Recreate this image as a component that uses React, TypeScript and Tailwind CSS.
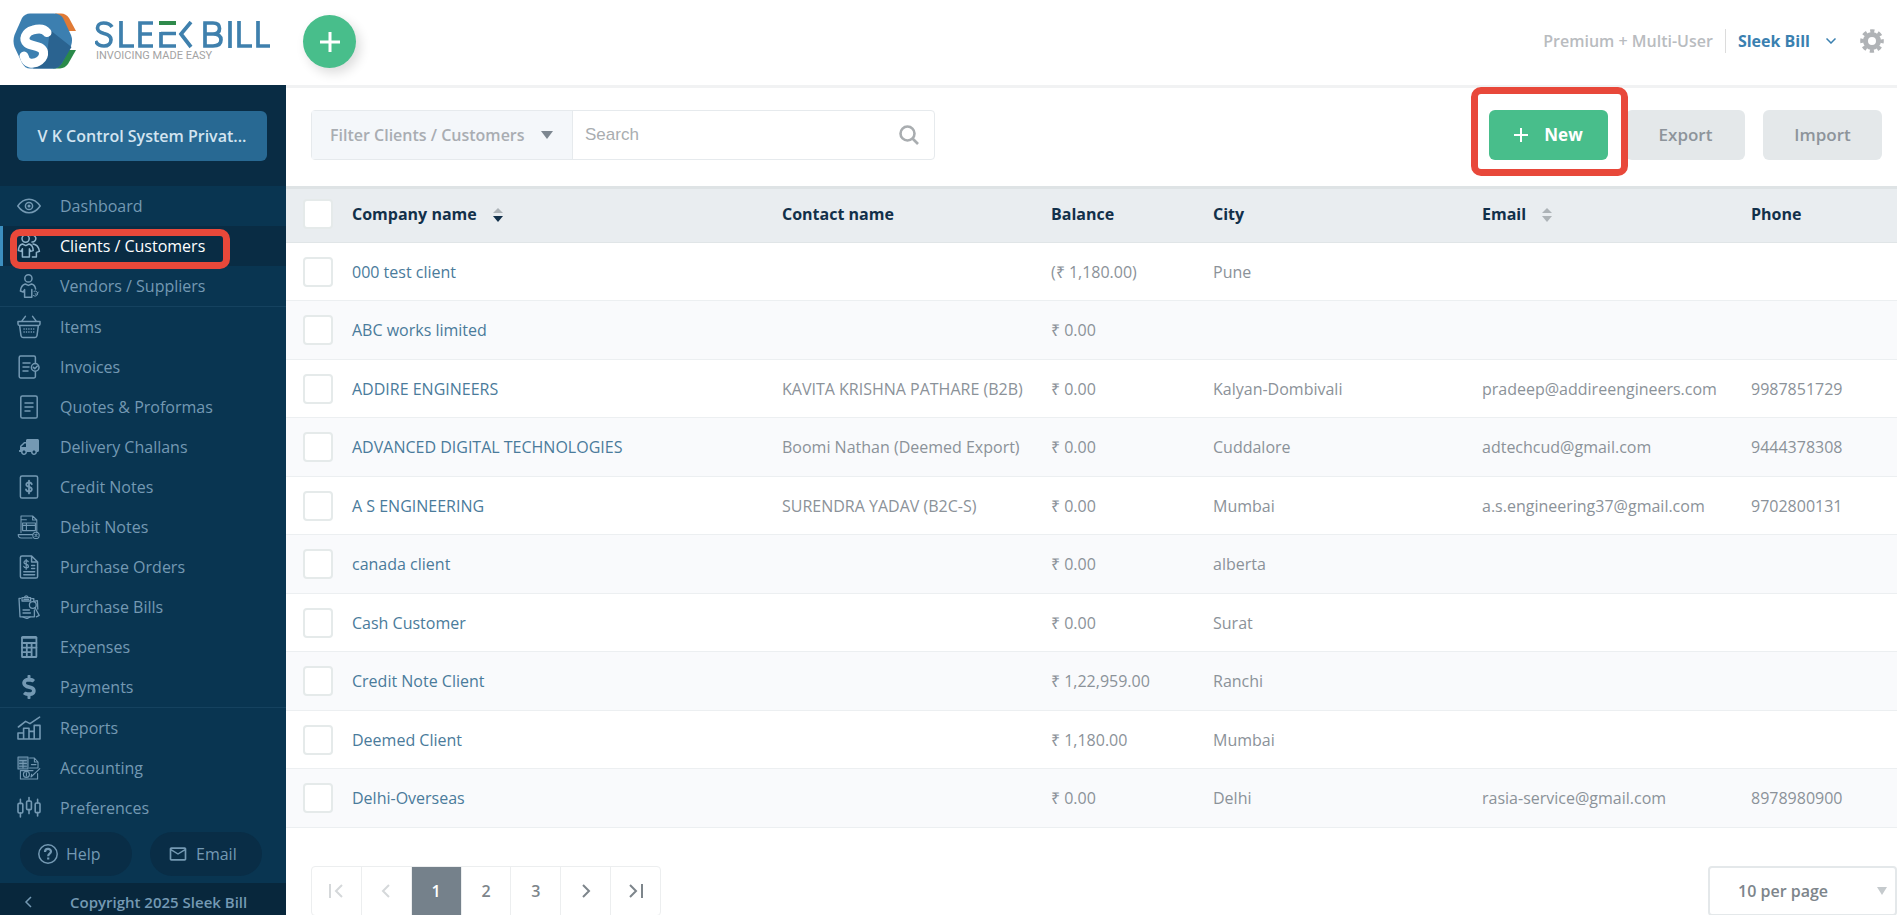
import type { ReactNode } from 'react';
import { FaDollarSign, FaTruck } from 'react-icons/fa';
import { MdOutlineEmail } from 'react-icons/md';

type Client = {
  name: string;
  contact?: string;
  balance: string;
  city?: string;
  email?: string;
  phone?: string;
};

const CLIENTS: Client[] = [
  { name: '000 test client', balance: '(₹ 1,180.00)', city: 'Pune' },
  { name: 'ABC works limited', balance: '₹ 0.00' },
  {
    name: 'ADDIRE ENGINEERS',
    contact: 'KAVITA KRISHNA PATHARE (B2B)',
    balance: '₹ 0.00',
    city: 'Kalyan-Dombivali',
    email: 'pradeep@addireengineers.com',
    phone: '9987851729',
  },
  {
    name: 'ADVANCED DIGITAL TECHNOLOGIES',
    contact: 'Boomi Nathan (Deemed Export)',
    balance: '₹ 0.00',
    city: 'Cuddalore',
    email: 'adtechcud@gmail.com',
    phone: '9444378308',
  },
  {
    name: 'A S ENGINEERING',
    contact: 'SURENDRA YADAV (B2C-S)',
    balance: '₹ 0.00',
    city: 'Mumbai',
    email: 'a.s.engineering37@gmail.com',
    phone: '9702800131',
  },
  { name: 'canada client', balance: '₹ 0.00', city: 'alberta' },
  { name: 'Cash Customer', balance: '₹ 0.00', city: 'Surat' },
  { name: 'Credit Note Client', balance: '₹ 1,22,959.00', city: 'Ranchi' },
  { name: 'Deemed Client', balance: '₹ 1,180.00', city: 'Mumbai' },
  { name: 'Delhi-Overseas', balance: '₹ 0.00', city: 'Delhi', email: 'rasia-service@gmail.com', phone: '8978980900' },
];

function Icon({ children, width = 1.5 }: { children: ReactNode; width?: number }) {
  return (
    <svg
      viewBox="0 0 24 24"
      className="size-6"
      fill="none"
      stroke="currentColor"
      strokeWidth={width}
      strokeLinecap="round"
      strokeLinejoin="round"
      aria-hidden="true"
    >
      {children}
    </svg>
  );
}

const EyeIcon = () => (
  <Icon>
    <path d="M0.8 12 C4 7.4 7.8 5.2 12 5.2 S20 7.4 23.2 12 C20 16.6 16.2 18.8 12 18.8 S4 16.6 0.8 12 Z" />
    <circle cx="12" cy="12" r="3.6" />
    <circle cx="12" cy="12" r="0.8" />
  </Icon>
);

const ClientsIcon = () => (
  <Icon>
    <circle cx="8.6" cy="4.6" r="3.6" />
    <path d="M13.4 1.4 a3.6 3.6 0 1 1 1.6 6.7" />
    <path d="M5.4 10 C3 10.6 1.6 13 1.4 16.6 L4.2 17.4 L5.4 14.8 V23 H12.4 V14.8 L13.6 17.4 L16.2 16.6 C16 13 14.6 10.6 12 10 L8.8 11.6 Z" />
    <path d="M16 10 c3.6 0.4 5.8 3 6.4 7.4 l-3 1 V23 h-4" />
  </Icon>
);

const VendorIcon = () => (
  <Icon>
    <circle cx="11.4" cy="4.4" r="3.6" />
    <path d="M18.6 15 C18.2 12.4 16.4 10.4 14.6 10 L11.4 11.4 L8.2 10 C5.6 10.8 3.8 13.4 3.4 17 L6.2 18 L7.6 15.6 V23.2 H14.8 V15.6" />
    <path d="M16.4 21.6 a2.6 2.6 0 1 0 0.6 -4.4 M18 19.6 l1.2 1 l2.2 -2.6" strokeWidth="1" />
  </Icon>
);

const BasketIcon = () => (
  <Icon>
    <path d="M1 6.6 H23 V9 Q23 10.4 21.6 10.4 H2.4 Q1 10.4 1 9 Z M2.6 10.4 L4 20.6 Q4.3 22.4 6 22.4 H18 Q19.7 22.4 20 20.6 L21.4 10.4 M4.6 6.4 L8.4 1.4 M19.4 6.4 L15.6 1.4" />
    <path d="M7 14 H17.6 M7 17 H17.6" strokeDasharray="0.2 2.2" />
  </Icon>
);

const InvoiceIcon = () => (
  <Icon>
    <path d="M18.4 8.4 V2.4 Q18.4 1 17 1 H3.6 Q2.2 1 2.2 2.4 V21.6 Q2.2 23 3.6 23 H17 Q18.4 23 18.4 21.6 V16.4" />
    <path d="M6 8 H13 M6 12 H12 M6 16 H11" />
    <circle cx="18.2" cy="12.4" r="3.8" />
    <path d="M16.4 12.4 l1.4 1.4 l2.6 -2.8" />
  </Icon>
);

const QuoteIcon = () => (
  <Icon>
    <rect x="3.8" y="0.9" width="16.4" height="22.2" rx="1.6" />
    <path d="M8 8 H16 M8 12 H16 M8 16 H13" />
  </Icon>
);

const CreditIcon = () => (
  <Icon>
    <rect x="3.4" y="0.9" width="17.2" height="22.2" rx="1.6" />
    <path
      d="M14.8 9.2 C14.2 7.8 12.8 7.4 11.8 7.5 C10.2 7.6 9.2 8.4 9.3 9.8 C9.4 12.6 14.8 11.2 14.8 14.2 C14.8 15.6 13.4 16.4 12 16.4 C10.6 16.4 9.4 15.8 9 14.4 M12 5.6 V18.4"
      strokeWidth="1.8"
    />
  </Icon>
);

const DebitIcon = () => (
  <Icon width={1.1}>
    <path d="M4 17.6 V1 H15.6 L19.8 5 V18 M15.6 1 V5 H19.8 M4.4 4.8 H9.4" />
    <path d="M5.6 8 H18.4 V15.6 H5.6 Z M5.6 10.4 H18.4 M9.4 8 V15.6" />
    <path d="M15.6 19.6 H1.2 Q1.2 23 4.4 23 H15" />
    <circle cx="19" cy="20.4" r="3.2" />
    <path d="M18 19.4 l2 2 M20 19.4 l-2 2" />
  </Icon>
);

const PurchaseOrderIcon = () => (
  <Icon>
    <path d="M14.6 1 H5 Q3.4 1 3.4 2.6 V21.4 Q3.4 23 5 23 H19 Q20.6 23 20.6 21.4 V7 Z M14.6 1 V7 H20.6" />
    <path d="M11.2 6.6 C10.6 5.4 7 5.2 7 7.4 C7 9.6 11.4 8.8 11.4 11.2 C11.4 13.4 7.4 13.2 6.8 11.4 M9.2 4.4 V14.2" strokeWidth="1.3" />
    <path d="M14.6 10.6 H17.6 M14.6 13.6 H17.6 M6.8 16.8 H17.6 M6.8 19.8 H17.6" />
  </Icon>
);

const PurchaseBillIcon = () => (
  <Icon width={1.3}>
    <path d="M3.4 3.4 H2 L3 21.8 H17.4 V15 M14.6 3.6 H16.8 V6" />
    <path d="M5 2.6 H13.6 V6 H5 Z M7.2 2.6 Q9.2 -0.8 11.4 2.6 M7 4.4 h4.6" />
    <circle cx="15.8" cy="10" r="3.4" />
    <path d="M18 12.8 L22.2 20.4 L19.4 21.8 M17 6.4 L20.4 5.6 L20.8 14 M6 15 H12.4 M6 18 H13.4 M6 22 L10 23.6 L13 22" />
  </Icon>
);

const CalculatorIcon = () => (
  <Icon width={1.8}>
    <rect x="5" y="2" width="14.4" height="20" rx="0.6" />
    <path d="M5 8 H19.4 M5 12.6 H19.4 M5 17.2 H14.6 M9.8 8 V22 M14.6 8 V22" />
    <path d="M5 2.8 H19.4" />
  </Icon>
);

const ReportsIcon = () => (
  <Icon width={1.6}>
    <path d="M1 23 V17 H6.6 V23 Z M6.6 23 V12.2 H12 V23 M12 23 V15.4 H17.2 V23 M17.2 23 V9.4 H23 V23 Z M1 23 H23" />
    <path d="M1.4 11 L8.6 5.4 L13 7.600 L22.6 1.2" />
  </Icon>
);

const AccountingIcon = () => (
  <Icon width={1.1}>
    <path d="M1 1 H11 V13 H1 Z" fill="currentColor" fillOpacity="0.35" />
    <path d="M2.6 4.6 H9.4 M2.6 7.4 H9.4 M2.6 10.2 H9.4 M6 4.6 V12" />
    <path d="M12.6 2 H17.4 L21 6 V12 H12.6 M17.4 2 V6 H21 M14.4 8.6 H19" />
    <path d="M3.4 14.6 V23 H20.6 V17.6 M3.4 14.6 H16" />
    <circle cx="9.4" cy="18.4" r="3" />
    <path d="M9.4 16.8 V20 M14 21 L22.8 12.6 M14 21 l0.6 -2.6" />
  </Icon>
);

const PreferencesIcon = () => (
  <Icon width={1.6}>
    <path d="M3.4 3.4 V7.4 M3.4 17 V21 M12 1.6 V5 M12 13.6 V17.6 M20.6 3.4 V7 M20.6 16.6 V20" />
    <rect x="1" y="7.4" width="4.8" height="9.6" rx="1.2" />
    <rect x="9.6" y="5" width="4.8" height="8.6" rx="1.2" />
    <rect x="18.2" y="7" width="4.8" height="9.6" rx="1.2" />
  </Icon>
);

type NavItem = { label: string; icon: ReactNode; active?: boolean };

const NAV_GROUPS: NavItem[][] = [
  [
    { label: 'Dashboard', icon: <EyeIcon /> },
    { label: 'Clients / Customers', icon: <ClientsIcon />, active: true },
    { label: 'Vendors / Suppliers', icon: <VendorIcon /> },
  ],
  [
    { label: 'Items', icon: <BasketIcon /> },
    { label: 'Invoices', icon: <InvoiceIcon /> },
    { label: 'Quotes & Proformas', icon: <QuoteIcon /> },
    { label: 'Delivery Challans', icon: <FaTruck className="size-5 -scale-x-100" /> },
    { label: 'Credit Notes', icon: <CreditIcon /> },
    { label: 'Debit Notes', icon: <DebitIcon /> },
    { label: 'Purchase Orders', icon: <PurchaseOrderIcon /> },
    { label: 'Purchase Bills', icon: <PurchaseBillIcon /> },
    { label: 'Expenses', icon: <CalculatorIcon /> },
    { label: 'Payments', icon: <FaDollarSign className="size-6" /> },
  ],
  [
    { label: 'Reports', icon: <ReportsIcon /> },
    { label: 'Accounting', icon: <AccountingIcon /> },
    { label: 'Preferences', icon: <PreferencesIcon /> },
  ],
];

function LogoMark() {
  return (
    <svg viewBox="0 0 64 56" className="h-14 w-16" aria-hidden="true">
      <path d="M42 0.500 H48 Q53 0.500 56 5 L63 18 H54 Z" fill="#e07a35" />
      <path d="M63 37 L55 51 Q52 55 47 55.500 H40 L54 37 Z" fill="#2a8a4a" />
      <path d="M17 0.500 H41 Q47 0.500 50 5 L58 22 Q60 27 58 33 L49 50 Q46 55.500 40 55.500 H17 Q12 55.500 9 50 L1.500 34 Q-0.500 28 1.500 22 L9 5 Q12 0.500 17 0.500 Z" fill="#3c7fb0" />
      <path d="M37 17 L58.500 34 L49 50 Q46 55.500 40 55.500 H20 L34 40 Z" fill="#2a6390" />
      <path
        d="M34 19.500 C31 15.500 25 15.500 20 17 C12 19 10 26.500 14 30 C18 33.500 29 32 30.500 39 C31.500 46 24 51 17 50 C14 49.500 12 47 11 43"
        fill="none"
        stroke="#fff"
        strokeWidth="9"
        strokeLinecap="round"
      />
    </svg>
  );
}

function Wordmark() {
  return (
    <svg viewBox="0 0 176 42" className="h-[42px] w-44" role="img" aria-label="Sleek Bill, invoicing made easy">
      <g fill="none" stroke="#3f80ad" strokeWidth="3.700">
        <path d="M17 6 C15 2.500 11 2 8.500 2 C4.500 2 2.500 4.500 2.500 7 C2.500 10 5 11.500 9 12.500 C13.500 13.500 16 15.500 16 18.800 C16 22.500 13 25 9 25 C5 25 2 23.500 0.500 20" />
        <path d="M26 0 V25 H39" />
        <path d="M58 2 H45 V25 H58 M45 13 H57" />
        <path d="M81 25 H66 V11 M66 12.500 H81" />
        <path d="M96 1 L86 13 L96 26" />
        <path d="M110 2 V25 H118 C124 25 126 22 126 18.800 C126 15 123 13 118 13 H110 M118 13 C122 13 124.500 11 124.500 7.500 C124.500 4 122 2 118 2 H108.200" />
        <path d="M135 0 V27 M144 0 V25 H157 M163 0 V25 H175" />
      </g>
      <path d="M64 0 H81 V4 H64 Z" fill="#2f8a4c" />
      <text x="1" y="38" fill="#a3a3a3" fontSize="11" fontFamily="Roboto, sans-serif">
        INVOICING MADE EASY
      </text>
    </svg>
  );
}

function Header() {
  return (
    <header className="flex h-[85px] shrink-0 items-start bg-white">
      <a href="#" className="flex gap-[18px] pt-[13px] pl-[13px]" aria-label="Sleek Bill home">
        <LogoMark />
        <span className="pt-2">
          <Wordmark />
        </span>
      </a>
      <button
        type="button"
        aria-label="Add"
        className="mt-[15px] ml-8 flex size-[53px] items-center justify-center rounded-full bg-[#48be8b] text-white shadow-[4px_5px_12px_rgba(0,0,0,0.14)]"
      >
        <svg viewBox="0 0 20 20" className="size-5" stroke="currentColor" strokeWidth="3" aria-hidden="true">
          <path d="M10 0 V20 M0 10 H20" />
        </svg>
      </button>
      <div className="ml-auto flex h-[82px] items-center pr-[13px]">
        <span className="border-r border-[#dcdcdc] pr-3 text-base font-semibold text-[#b9bcbf]">Premium + Multi-User</span>
        <button type="button" className="flex items-center gap-4 pl-3 text-base font-bold text-[#3a80b0]">
          Sleek Bill
          <svg viewBox="0 0 10 6" className="h-1.5 w-2.5" fill="none" stroke="currentColor" strokeWidth="1.500" aria-hidden="true">
            <path d="M0.500 0.500 L5 5 L9.500 0.500" />
          </svg>
        </button>
        <button type="button" aria-label="Settings" className="ml-6 text-[#b0b3b6]">
          <svg viewBox="0 0 24 24" className="size-6" aria-hidden="true">
            <g fill="none" stroke="currentColor">
              <circle cx="12" cy="12" r="6.500" strokeWidth="5" />
              <circle cx="12" cy="12" r="10" strokeWidth="3.600" strokeDasharray="4.200 3.654" strokeDashoffset="2.100" />
            </g>
          </svg>
        </button>
      </div>
    </header>
  );
}

function Sidebar() {
  return (
    <aside className="flex w-[286px] shrink-0 flex-col bg-[#093551] text-[#7499b3]">
      <div className="flex h-[101px] shrink-0 items-center bg-[#092c44] pl-[17px]">
        <button type="button" className="h-[50px] w-[250px] rounded-md bg-[#286993] text-base font-semibold text-[#d3e4f0]">
          V K Control System Privat...
        </button>
      </div>
      <nav>
        {NAV_GROUPS.map((group, i) => (
          <ul key={i} className="border-b border-[#15425f] last:border-b-0">
            {group.map((item) => (
              <li key={item.label} className="relative">
                <a
                  href="#"
                  aria-current={item.active ? 'page' : undefined}
                  className={
                    item.active
                      ? 'flex h-10 items-center border-l-[3px] border-[#3c8fc0] bg-[#092c44] pl-[14px] text-base text-white'
                      : 'flex h-10 items-center pl-[17px] text-base'
                  }
                >
                  <span className={item.active ? 'flex w-[43px] text-[#8fb2c9]' : 'flex w-[43px]'}>
                    <span className="flex w-6 justify-center">{item.icon}</span>
                  </span>
                  {item.label}
                </a>
                {item.active && (
                  <span className="pointer-events-none absolute top-[3px] left-[10px] h-10 w-[220px] rounded-[10px] border-[7px] border-[#e8483a]" />
                )}
              </li>
            ))}
          </ul>
        ))}
      </nav>
      <div className="flex h-[55px] shrink-0 items-start gap-[18px] px-5 pt-1 text-base">
        <a href="#" className="flex h-11 w-28 items-center gap-2 rounded-full bg-[#092d46] pl-[18px]">
          <svg viewBox="0 0 20 20" className="size-5" fill="none" stroke="currentColor" strokeWidth="1.500" aria-hidden="true">
            <circle cx="10" cy="10" r="9.200" />
            <path d="M7 8 C7 4 13 4 13 7.600 C13 9.800 10.200 9.600 10.200 12.200 M10.200 13.600 V15.600" strokeWidth="2.200" />
          </svg>
          Help
        </a>
        <a href="#" className="flex h-11 w-28 items-center gap-2 rounded-full bg-[#092d46] pl-[18px]">
          <MdOutlineEmail className="size-5" />
          Email
        </a>
      </div>
      <footer className="flex h-[38px] shrink-0 items-center bg-[#08273c] pl-6 text-[15px] font-semibold">
        <button type="button" aria-label="Collapse sidebar" className="w-[46px]">
          <svg viewBox="0 0 8 12" className="h-3 w-2" fill="none" stroke="currentColor" strokeWidth="1.500" aria-hidden="true">
            <path d="M7 1 L2 6 L7 11" />
          </svg>
        </button>
        Copyright 2025 Sleek Bill
      </footer>
    </aside>
  );
}

function Toolbar() {
  return (
    <div className="flex h-[101px] shrink-0 items-start justify-between border-t-[3px] border-[#f1f2f3] pt-[22px] pr-[15px] pl-[25px]">
      <form className="flex h-[50px] w-[624px] rounded-[4px] border border-[#e6eaed]">
        <button
          type="button"
          className="flex w-[261px] items-center gap-4 border-r border-[#e6eaed] bg-[#f4f7fa] pl-[18px] text-base font-semibold text-[#a9adb2]"
        >
          Filter Clients / Customers
          <svg viewBox="0 0 12 8" className="h-2 w-3 text-[#7d8790]" fill="currentColor" aria-hidden="true">
            <path d="M0 0 H12 L6 8 Z" />
          </svg>
        </button>
        <input
          type="text"
          aria-label="Search clients"
          placeholder="Search"
          className="min-w-0 flex-1 px-3 font-['Liberation_Sans',sans-serif] text-[17px] outline-none placeholder:text-[#a9adb0]"
        />
        <button type="submit" aria-label="Search" className="w-[50px] text-[#a9adb0]">
          <svg viewBox="0 0 20 20" className="mx-auto size-5" fill="none" stroke="currentColor" strokeWidth="2.600" aria-hidden="true">
            <circle cx="8.500" cy="8.500" r="7" />
            <path d="M13.500 13.500 L19 19" />
          </svg>
        </button>
      </form>
      <div className="flex gap-[18px] text-[17px] font-semibold">
        <div className="relative">
          <button type="button" className="flex h-[50px] w-[119px] items-center justify-center gap-4 rounded-md bg-[#48be8b] font-bold text-white">
            <svg viewBox="0 0 14 14" className="size-3.5" stroke="currentColor" strokeWidth="2" aria-hidden="true">
              <path d="M7 0 V14 M0 7 H14" />
            </svg>
            New
          </button>
          <span className="pointer-events-none absolute -top-[23px] -right-5 -bottom-4 -left-[18px] z-10 rounded-[10px] border-[7px] border-[#e8483a]" />
        </div>
        <button type="button" className="h-[50px] w-[119px] rounded-md bg-[#e4e8ea] text-[#8d949b]">
          Export
        </button>
        <button type="button" className="h-[50px] w-[119px] rounded-md bg-[#e4e8ea] text-[#8d949b]">
          Import
        </button>
      </div>
    </div>
  );
}

function SortIcon({ active = false }: { active?: boolean }) {
  return (
    <svg viewBox="0 0 10 14" className="ml-4 inline h-3.5 w-2.5" aria-hidden="true">
      <path d="M5 0 L10 5 H0 Z" fill="#adb3b7" />
      <path d="M5 14 L10 8 H0 Z" fill={active ? '#12304a' : '#adb3b7'} />
    </svg>
  );
}

function Checkbox({ label }: { label: string }) {
  return (
    <input
      type="checkbox"
      aria-label={label}
      className="block size-[30px] appearance-none rounded-[4px] border-2 border-[#e5eaea] bg-white checked:bg-[#286993]"
    />
  );
}

function ClientTable() {
  return (
    <table className="w-full table-fixed border-separate border-spacing-0 text-left text-base text-[#8b9299] [&_td]:border-b [&_td]:border-[#eceff1] [&_th]:border-t-[3px] [&_th]:border-b [&_th]:border-t-[#dee3e5] [&_th]:border-b-[#e0e5e7] [&_th]:pb-1">
      <colgroup>
        <col className="w-[66px]" />
        <col className="w-[430px]" />
        <col className="w-[269px]" />
        <col className="w-[162px]" />
        <col className="w-[269px]" />
        <col className="w-[269px]" />
        <col />
      </colgroup>
      <thead className="bg-[#e9edf0] text-[#12304a]">
        <tr className="h-[57px]">
          <th className="pl-[17px]">
            <Checkbox label="Select all" />
          </th>
          <th className="font-bold">
            Company name
            <SortIcon active />
          </th>
          <th className="font-bold">Contact name</th>
          <th className="font-bold">Balance</th>
          <th className="font-bold">City</th>
          <th className="font-bold">
            Email
            <SortIcon />
          </th>
          <th className="font-bold">Phone</th>
        </tr>
      </thead>
      <tbody>
        {CLIENTS.map((client) => (
          <tr key={client.name} className="h-[58px] even:h-[59px] even:bg-[#f9fafc]">
            <td className="pl-[17px]">
              <Checkbox label={`Select ${client.name}`} />
            </td>
            <td>
              <a href="#" className="text-[#4a7b9b]">
                {client.name}
              </a>
            </td>
            <td className="whitespace-nowrap">{client.contact}</td>
            <td className="whitespace-nowrap">{client.balance}</td>
            <td>{client.city}</td>
            <td>{client.email}</td>
            <td>{client.phone}</td>
          </tr>
        ))}
      </tbody>
    </table>
  );
}

const PAGE_BUTTON = 'flex flex-1 items-center justify-center border-r border-[#eceeef] last:border-r-0';

function Chevron({ d }: { d: string }) {
  return (
    <svg viewBox="0 0 16 16" className="size-4" fill="none" stroke="currentColor" strokeWidth="2" aria-hidden="true">
      <path d={d} />
    </svg>
  );
}

function Pagination() {
  return (
    <div className="mt-[38px] flex shrink-0 items-start justify-between pl-[25px] text-base font-semibold text-[#7d858b]">
      <div className="flex h-[50px] w-[350px] rounded-[4px] border border-[#eceeef]">
        <button type="button" aria-label="First page" disabled className={`${PAGE_BUTTON} text-[#d5d8da]`}>
          <Chevron d="M2 1 V15 M14 2 L8 8 L14 14" />
        </button>
        <button type="button" aria-label="Previous page" disabled className={`${PAGE_BUTTON} text-[#d5d8da]`}>
          <Chevron d="M11 2 L5 8 L11 14" />
        </button>
        <button type="button" aria-current="page" className={`${PAGE_BUTTON} bg-[#75818b] text-white`}>
          1
        </button>
        <button type="button" className={PAGE_BUTTON}>
          2
        </button>
        <button type="button" className={PAGE_BUTTON}>
          3
        </button>
        <button type="button" aria-label="Next page" className={PAGE_BUTTON}>
          <Chevron d="M5 2 L11 8 L5 14" />
        </button>
        <button type="button" aria-label="Last page" className={PAGE_BUTTON}>
          <Chevron d="M2 2 L8 8 L2 14 M14 1 V15" />
        </button>
      </div>
      <div className="relative">
        <select
          aria-label="Rows per page"
          className="h-[50px] w-[189px] appearance-none rounded-[4px] border-2 border-[#e4e8ea] bg-white pl-7 font-semibold"
        >
          <option>10 per page</option>
          <option>25 per page</option>
          <option>50 per page</option>
        </select>
        <svg viewBox="0 0 10 8" className="pointer-events-none absolute top-[21px] right-2.5 h-2 w-2.5" fill="#c5cacd" aria-hidden="true">
          <path d="M0 0 H10 L5 8 Z" />
        </svg>
      </div>
    </div>
  );
}

export default function App() {
  return (
    <div className="flex h-screen flex-col overflow-hidden bg-white font-['Open_Sans',sans-serif]">
      <Header />
      <div className="flex min-h-0 flex-1">
        <Sidebar />
        <main className="flex min-w-0 flex-1 flex-col">
          <Toolbar />
          <ClientTable />
          <Pagination />
        </main>
      </div>
    </div>
  );
}
